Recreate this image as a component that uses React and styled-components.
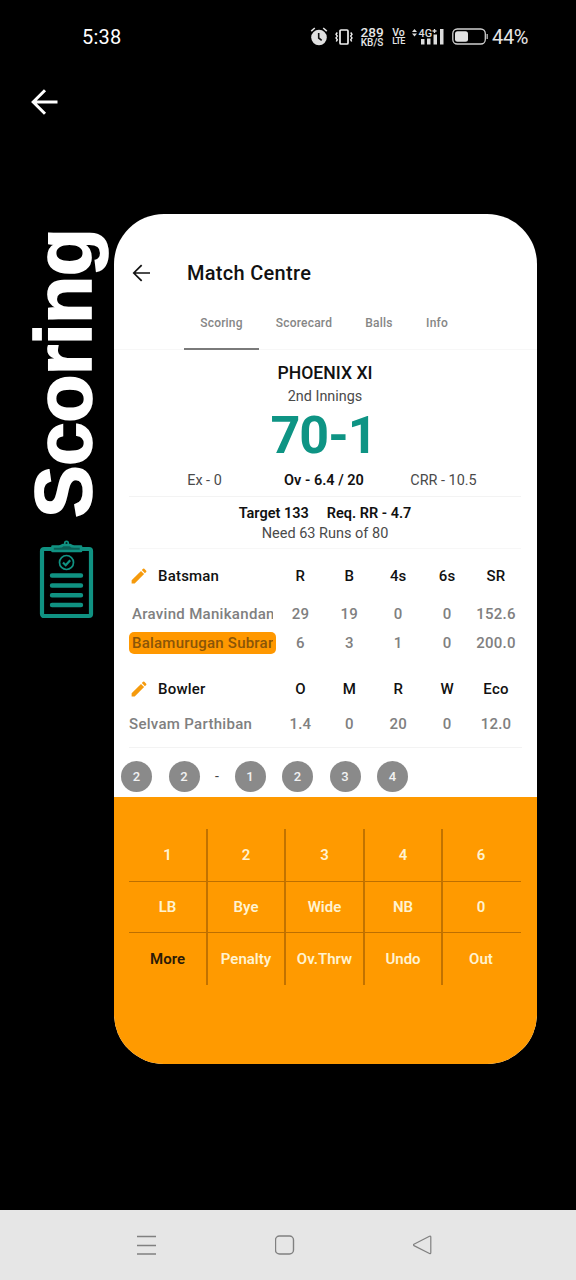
import React from "react";
import styled, { createGlobalStyle } from "styled-components";

const GlobalStyle = createGlobalStyle`
  * { box-sizing: border-box; }
  body { margin: 0; background: #000; font-family: Roboto, "Liberation Sans", sans-serif; }
  svg { display: block; flex: none; }
`;

const Screen = styled.div`
  width: 576px;
  height: 1280px;
  display: flex;
  flex-direction: column;
  background: #000;
  overflow: hidden;
`;

const StatusBar = styled.header`
  height: 74px;
  flex: none;
  display: flex;
  align-items: center;
  justify-content: space-between;
  padding: 0 48px 0 82px;
  color: #fff;
`;

const Clock = styled.span`
  font-size: 20px;
  line-height: 24px;
  letter-spacing: 0.2px;
`;

const StatusIcons = styled.div`
  display: flex;
  align-items: center;
  color: #e6e6e6;
`;

const Stacked = styled.span`
  width: ${(p) => p.$width}px;
  margin-left: ${(p) => p.$gap}px;
  display: flex;
  flex-direction: column;
  align-items: center;
  font-weight: 500;
  white-space: nowrap;
`;

const StackLine = styled.span`
  font-size: ${(p) => p.$size}px;
  line-height: ${(p) => p.$line}px;
  letter-spacing: ${(p) => p.$track || 0}px;
`;

const Percent = styled.span`
  margin-left: 4px;
  font-size: 20px;
  line-height: 24px;
  letter-spacing: -0.4px;
`;

const BackBar = styled.div`
  height: 140px;
  flex: none;
  padding: 13px 29px;
`;

const Showcase = styled.main`
  display: flex;
  height: 850px;
  flex: none;
`;

const Rail = styled.aside`
  width: 114px;
  display: flex;
  flex-direction: column;
  padding-top: 12px;
`;

const RailTitle = styled.h1`
  margin: 0 0 0 18px;
  height: 294px;
  width: 92px;
  writing-mode: vertical-rl;
  transform: rotate(180deg);
  padding-top: 2px;
  font-family: "Liberation Sans", Arial, sans-serif;
  font-size: 79px;
  line-height: 92px;
  font-weight: 700;
  letter-spacing: -0.7px;
  -webkit-text-stroke: 1.6px #fff;
  color: #fff;
  white-space: nowrap;
`;

const RailIcon = styled.div`
  margin: 20px 0 0 38px;
`;

const Phone = styled.section`
  width: 423px;
  height: 850px;
  border-radius: 50px;
  background: #fff;
  overflow: hidden;
  display: flex;
  flex-direction: column;
`;

const Header = styled.div`
  height: 83px;
  flex: none;
  display: flex;
  align-items: center;
  padding: 34px 0 0 17px;
`;

const Title = styled.h2`
  margin: 0 0 0 36px;
  font-size: 20px;
  line-height: 24px;
  font-weight: 500;
  letter-spacing: 0.3px;
  color: #111;
`;

const Tabs = styled.nav`
  height: 53px;
  flex: none;
  display: flex;
  padding-left: 70px;
  border-bottom: 1px solid #f7f7f7;
`;

const Tab = styled.span`
  width: ${(p) => p.$width}px;
  height: 53px;
  padding-top: 18px;
  text-align: center;
  font-size: 12px;
  line-height: 16px;
  font-weight: 500;
  letter-spacing: 0.2px;
  color: #868686;
  border-bottom: 2px solid ${(p) => (p.$active ? "#7a7a7a" : "transparent")};
`;

const Summary = styled.div`
  height: 147px;
  flex: none;
  margin: 0 16px 0 15px;
  padding-top: 12px;
  display: flex;
  flex-direction: column;
  align-items: center;
  border-bottom: 1px solid #f3f3f3;
`;

const Team = styled.span`
  font-size: 17.6px;
  line-height: 22px;
  font-weight: 500;
  color: #111;
`;

const Innings = styled.span`
  margin-top: 3px;
  font-size: 14.4px;
  line-height: 20px;
  color: #4a4a4a;
`;

const Score = styled.span`
  margin: 1px 0 0 -3px;
  font-size: 52px;
  line-height: 56px;
  font-weight: 700;
  letter-spacing: -1px;
  color: #0e9484;
`;

const Rates = styled.div`
  align-self: stretch;
  display: grid;
  grid-template-columns: 151px 88px 151px;
  line-height: 20px;
  margin-top: 7px;
  font-size: 14.4px;
  color: #4a4a4a;
  text-align: center;
`;

const Strong = styled.span`
  font-size: 14.5px;
  font-weight: 600;
  color: #111;
  white-space: nowrap;
`;

const Chase = styled.div`
  height: 52px;
  flex: none;
  margin: 0 16px 0 15px;
  padding-top: 7px;
  text-align: center;
  line-height: 20px;
  font-size: 14.5px;
  color: #4a4a4a;
  border-bottom: 1px solid #f7f7f7;
`;

const ChaseTop = styled.div`
  display: flex;
  justify-content: center;
  gap: 18px;
`;

const Tables = styled.div`
  height: 199px;
  flex: none;
  margin: 0 15px;
  border-bottom: 1px solid #f3f3f3;
`;

const Row = styled.div`
  display: grid;
  grid-template-columns: 147px repeat(5, 48.9px);
  align-items: center;
  height: ${(p) => p.$height}px;
  font-size: 15px;
  font-weight: 500;
  letter-spacing: 0.2px;
  color: ${(p) => (p.$head ? "#111" : "#808080")};
  text-align: center;
`;

const Heading = styled.span`
  display: flex;
  align-items: center;
  gap: 11px;
  padding-left: 2px;
`;

const Name = styled.span`
  height: 22px;
  line-height: 22px;
  padding: 0 ${(p) => (p.$inset ? 3 : 0)}px;
  text-align: left;
  border-radius: 5px;
  background: ${(p) => (p.$active ? "#ff9800" : "transparent")};
  color: ${(p) => (p.$active ? "#8a5508" : "inherit")};
`;

const NameText = styled.span`
  display: block;
  overflow: hidden;
  white-space: nowrap;
  letter-spacing: ${(p) => p.$track}px;
`;

const Balls = styled.div`
  height: 49px;
  flex: none;
  display: flex;
  align-items: center;
  gap: 16.5px;
  padding: 7px 0 0 7px;
`;

const Ball = styled.span`
  width: 31px;
  height: 31px;
  border-radius: 50%;
  background: #8a8a8a;
  color: #f2f2f2;
  font-size: 13px;
  font-weight: 500;
  line-height: 31px;
  text-align: center;
`;

const Dash = styled.span`
  width: 2px;
  display: flex;
  justify-content: center;
  font-size: 14px;
  color: #444;
`;

const Pad = styled.div`
  flex: 1;
  background: #ff9a00;
  padding: 32px 16px 0 15px;
`;

const Keys = styled.div`
  display: grid;
  grid-template-columns: 79px 78px 79px 78px 78px;
  grid-template-rows: 53px 51px 52px;
`;

const Key = styled.span`
  display: flex;
  align-items: center;
  justify-content: center;
  padding-right: ${(p) => (p.$lastCol ? 2 : 0)}px;
  font-size: 15px;
  font-weight: 600;
  color: ${(p) => (p.$dark ? "#2b1a08" : "#fff3d0")};
  border-right: ${(p) => (p.$lastCol ? 0 : 2)}px solid rgba(110, 60, 0, 0.42);
  border-bottom: ${(p) => (p.$lastRow ? 0 : 1)}px solid rgba(110, 60, 0, 0.45);
`;

const NavBar = styled.footer`
  height: 70px;
  flex: none;
  margin-top: auto;
  display: flex;
  align-items: center;
  gap: 118px;
  padding-left: 137px;
  background: #e6e6e6;
`;

const BackArrow = ({ size, color, weight }) => (
  <svg width={size} height={size} viewBox="0 0 30 30" fill="none" stroke={color} strokeWidth={weight}>
    <path d="M28.500 15H4.500M16 3.200 4.200 15 16 26.800" />
  </svg>
);

const Pencil = () => (
  <svg width="16" height="16" viewBox="0 0 16 16" fill="#f59a0c">
    <path d="M0.6 12.3 10 2.900l3.100 3.100-9.400 9.400H.6z" />
    <path d="M10.800 2.100l1.300-1.300q.6-.5 1.200 0l1.900 1.900q.5.6 0 1.200l-1.300 1.300z" />
  </svg>
);

const Clipboard = () => (
  <svg width="56" height="80" viewBox="0 0 56 80" fill="none" stroke="#109282">
    <rect x="4" y="9" width="49" height="67" rx="2" strokeWidth="4.200" />
    <path d="M14.500 6.500h6.500q2.500 0 4-1.500h7q1.500 1.500 4 1.500h7v4.500H14.500z" fill="#0a5f56" strokeWidth="2.600" strokeLinejoin="round" />
    <circle cx="28.500" cy="3.200" r="1.800" strokeWidth="1.600" />
    <circle cx="28.500" cy="22.500" r="7" strokeWidth="1.700" />
    <path d="M25 22.500l2.700 2.700 4.500-5" strokeWidth="2.200" />
    <path d="M14 35.500h29M14 45.500h29M14 55.300h29M14 65h29" strokeWidth="4.400" strokeLinecap="round" />
  </svg>
);

const Alarm = () => (
  <svg width="18" height="20" viewBox="0 0 18 20" fill="none" stroke="#e0e0e0">
    <circle cx="9" cy="10.500" r="7.800" fill="#e0e0e0" stroke="none" />
    <path d="M1.200 4.100 4.800 1M16.800 4.100 13.200 1" strokeWidth="1.600" />
    <path d="M8.700 6v5l3 2.300" stroke="#111" strokeWidth="1.600" />
  </svg>
);

const Vibrate = () => (
  <svg width="18" height="18" viewBox="0 0 18 18" fill="none" stroke="#f0f0f0">
    <rect x="5" y="2" width="8" height="14" rx="1" strokeWidth="1.700" />
    <path d="M2.300 4.500l-1.300 1.800 1.300 1.800-1.300 1.800 1.300 1.800-1 1.800M15.700 4.500l1.300 1.800-1.300 1.800 1.300 1.800-1.300 1.800 1 1.800" strokeWidth="1.400" />
  </svg>
);

const Signal = () => (
  <svg width="32" height="22" viewBox="0 -2 32 22" overflow="visible" fill="#dcdcdc">
    <path d="M0 4 2.500 1 5 4zM0 5.500 2.500 8.500 5 5.500z" />
    <text x="6.500" y="9" fontFamily="Roboto, sans-serif" fontSize="11.500" fontWeight="500" textLength="13.500" lengthAdjust="spacingAndGlyphs">4G</text>
    <path d="M20.500 3h4M22.500 1v4" stroke="#dcdcdc" strokeWidth="1.300" />
    <path d="M9 11h3.500v5.500H9zM15 10.500h3.500v6H15zM21.500 6.500h3.500v10h-3.500zM28 1h3.500v15.500H28z" />
  </svg>
);

const Battery = () => (
  <svg width="36" height="18" viewBox="0 0 36 18" fill="none">
    <rect x="0.800" y="1" width="32.500" height="15" rx="4.500" stroke="#d0d0d0" strokeWidth="1.300" />
    <rect x="3" y="3.200" width="13" height="10.600" rx="2.500" fill="#e0e0e0" />
    <path d="M35.200 6v5" stroke="#a8a8a8" strokeWidth="1.500" />
  </svg>
);

const Spaced = styled.span`
  margin-left: ${(p) => p.$gap}px;
`;

const tabs = [
  ["Scoring", 75],
  ["Scorecard", 90],
  ["Balls", 60],
  ["Info", 56],
];

const batsmen = [
  { name: "Aravind Manikandan", stats: ["29", "19", "0", "0", "152.6"], track: 0.3 },
  { name: "Balamurugan Subram", stats: ["6", "3", "1", "0", "200.0"], track: 0.22, active: true },
];

const bowler = { name: "Selvam Parthiban", stats: ["1.4", "0", "20", "0", "12.0"], track: 0.3 };

const keys = [
  ["1", "2", "3", "4", "6"],
  ["LB", "Bye", "Wide", "NB", "0"],
  ["More", "Penalty", "Ov.Thrw", "Undo", "Out"],
];

const HeadRow = ({ height, label, columns }) => (
  <Row $head $height={height}>
    <Heading><Pencil />{label}</Heading>
    {columns.map((c) => <span key={c}>{c}</span>)}
  </Row>
);

const PlayerRow = ({ height, player, inset }) => (
  <Row $height={height}>
    <Name $active={player.active} $inset={inset}>
      <NameText $track={player.track}>{player.name}</NameText>
    </Name>
    {player.stats.map((s, i) => <span key={i}>{s}</span>)}
  </Row>
);

export default function App() {
  return (
    <Screen>
      <GlobalStyle />
      <StatusBar>
        <Clock>5:38</Clock>
        <StatusIcons>
          <Alarm />
          <Spaced $gap={7}><Vibrate /></Spaced>
          <Stacked $width={24} $gap={7}>
            <StackLine $size={13.6} $line={12}>289</StackLine>
            <StackLine $size={10} $line={10}>KB/S</StackLine>
          </Stacked>
          <Stacked $width={13} $gap={8}>
            <StackLine $size={10.5} $line={9.5}>Vo</StackLine>
            <StackLine $size={9} $line={9} $track={-0.6}>LTE</StackLine>
          </Stacked>
          <Spaced $gap={7}><Signal /></Spaced>
          <Spaced $gap={8}><Battery /></Spaced>
          <Percent>44%</Percent>
        </StatusIcons>
      </StatusBar>
      <BackBar><BackArrow size={30} color="#fff" weight={3} /></BackBar>
      <Showcase>
        <Rail>
          <RailTitle>Scoring</RailTitle>
          <RailIcon><Clipboard /></RailIcon>
        </Rail>
        <Phone>
          <Header>
            <BackArrow size={20} color="#111" weight={2.6} />
            <Title>Match Centre</Title>
          </Header>
          <Tabs>
            {tabs.map(([label, width], i) => (
              <Tab key={label} $width={width} $active={i === 0}>{label}</Tab>
            ))}
          </Tabs>
          <Summary>
            <Team>PHOENIX XI</Team>
            <Innings>2nd Innings</Innings>
            <Score>70-1</Score>
            <Rates>
              <span>Ex - 0</span>
              <Strong>Ov - 6.4 / 20</Strong>
              <span>CRR - 10.5</span>
            </Rates>
          </Summary>
          <Chase>
            <ChaseTop>
              <Strong>Target 133</Strong>
              <Strong>Req. RR - 4.7</Strong>
            </ChaseTop>
            Need 63 Runs of 80
          </Chase>
          <Tables>
            <HeadRow height={54} label="Batsman" columns={["R", "B", "4s", "6s", "SR"]} />
            <PlayerRow height={19} player={batsmen[0]} inset />
            <PlayerRow height={42} player={batsmen[1]} inset />
            <HeadRow height={49} label="Bowler" columns={["O", "M", "R", "W", "Eco"]} />
            <PlayerRow height={19} player={bowler} />
          </Tables>
          <Balls>
            <Ball>2</Ball>
            <Ball>2</Ball>
            <Dash>-</Dash>
            {[1, 2, 3, 4].map((n) => <Ball key={n}>{n}</Ball>)}
          </Balls>
          <Pad>
            <Keys>
              {keys.map((row, r) =>
                row.map((label, c) => (
                  <Key key={label} $dark={label === "More"} $lastRow={r === 2} $lastCol={c === 4}>{label}</Key>
                ))
              )}
            </Keys>
          </Pad>
        </Phone>
      </Showcase>
      <NavBar>
        <svg width="20" height="20" viewBox="0 0 20 20" stroke="#808080" strokeWidth="1.500">
          <path d="M0 1.500h19M0 10.500h19M0 19h19" />
        </svg>
        <svg width="20" height="20" viewBox="0 0 20 20" fill="none" stroke="#808080" strokeWidth="1.400">
          <rect x="0.500" y="1" width="18" height="18" rx="4" />
        </svg>
        <svg width="20" height="20" viewBox="0 0 20 20" fill="none" stroke="#808080" strokeWidth="1.200" strokeLinejoin="round">
          <path d="M.9 9.200 16.500 1.300q1.300-.5 1.300.8v15.600q0 1.300-1.300.8L.9 10.600q-.9-.7 0-1.400z" />
        </svg>
      </NavBar>
    </Screen>
  );
}
